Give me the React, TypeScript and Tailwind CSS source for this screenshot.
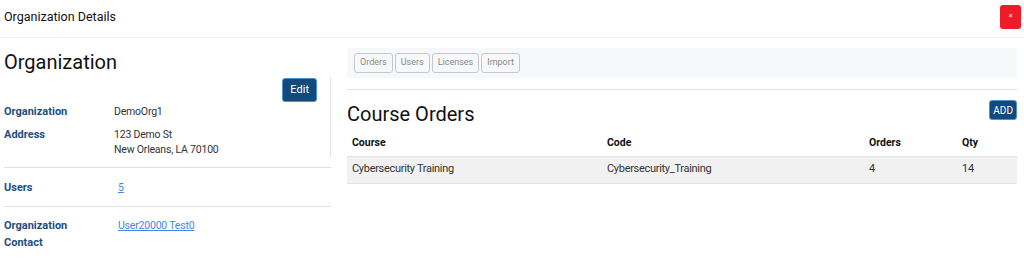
import React from 'react'

const font = { fontFamily: 'Roboto, "Liberation Sans", sans-serif' }

function InfoRow({ label, children }: { label: React.ReactNode; children: React.ReactNode }) {
  return (
    <div className="flex">
      <div className="w-[110px] shrink-0 font-bold text-[#1d4e7e] text-[11px] leading-[17px]">{label}</div>
      <div className="text-[10.5px] leading-[15px] tracking-[-0.2px] text-[#333] pt-[1px]">{children}</div>
    </div>
  )
}

export default function App() {
  const tabs = ['Orders', 'Users', 'Licenses', 'Import']

  return (
    <div className="w-[1024px] h-[277px] bg-white text-[#222] overflow-hidden" style={font}>
      {/* modal header */}
      <div className="flex items-center justify-between h-[38px] pl-[4px] pr-[3px] border-b border-[#eeeeee]">
        <span className="text-[12.5px] text-[#111] -mt-[3px]">Organization Details</span>
        <button className="w-[21px] h-[24px] -mt-[4px] rounded-[3px] bg-[#ee1c2a] text-white text-[7px] leading-none flex items-center justify-center">
          ×
        </button>
      </div>

      <div className="flex pt-[10px]">
        {/* left column */}
        <div className="w-[327px] shrink-0 ml-[4px]">
          <h2 className="text-[20px] leading-[28px] text-[#111]">Organization</h2>
          <div className="mt-[2px] pr-[13px] border-r border-[#e2e2e2]">
            <div className="flex justify-end">
              <button className="bg-[#134a7c] text-white text-[11px] px-[7px] h-[24px] rounded-[3px] border border-[#4d94c8]">
                Edit
              </button>
            </div>
            <div className="mt-[1px] flex flex-col gap-[6px]">
              <InfoRow label="Organization">DemoOrg1</InfoRow>
              <InfoRow label="Address">
                <div>123 Demo St</div>
                <div>New Orleans, LA 70100</div>
              </InfoRow>
            </div>
          </div>
          <div className="border-t border-[#e0e0e0] mt-[10px] pt-[11px] pb-[10px]">
            <InfoRow label="Users">
              <a className="ml-[4px] text-[#3f87e2] underline" href="#">5</a>
            </InfoRow>
          </div>
          <div className="border-t border-[#e0e0e0] pt-[10px]">
            <InfoRow label={<>Organization<br />Contact</>}>
              <a className="ml-[4px] text-[#3f87e2] underline" href="#">User20000 Test0</a>
            </InfoRow>
          </div>
        </div>

        {/* right column */}
        <div className="ml-[16px] w-[670px]">
          <div className="bg-[#f7f8f9] h-[30px] flex items-center gap-[2px] px-[7px]">
            {tabs.map(t => (
              <button
                key={t}
                className="h-[20px] px-[5px] text-[9px] text-[#888] border border-[#c8c8c8] rounded-[3px] bg-transparent"
              >
                {t}
              </button>
            ))}
          </div>
          <div className="border-t border-[#e2e2e2] mt-[11px]" />
          <div className="flex items-start justify-between mt-[10px]">
            <h3 className="text-[20px] leading-[28px] text-[#111]">Course Orders</h3>
            <button className="bg-[#134a7c] text-white text-[10px] h-[20px] px-[3px] rounded-[3px] border border-[#4d94c8]">
              ADD
            </button>
          </div>
          <table className="w-full mt-[2px] text-[11px] tracking-[-0.3px] border-collapse">
            <thead>
              <tr className="text-left text-[#111]">
                <th className="w-[255px] pl-[5px] h-[26px] font-bold text-[10.5px] tracking-normal">Course</th>
                <th className="w-[262px] pl-[5px] font-bold text-[10.5px] tracking-normal">Code</th>
                <th className="w-[93px] pl-[5px] font-bold text-[10.5px] tracking-normal">Orders</th>
                <th className="pl-[5px] font-bold text-[10.5px] tracking-normal">Qty</th>
              </tr>
            </thead>
            <tbody>
              <tr className="bg-[#f1f1f1] border-y border-[#e3e3e3] text-[#333]">
                <td className="pl-[5px] h-[27px]">Cybersecurity Training</td>
                <td className="pl-[5px]">Cybersecurity_Training</td>
                <td className="pl-[5px]">4</td>
                <td className="pl-[5px]">14</td>
              </tr>
            </tbody>
          </table>
        </div>
      </div>
    </div>
  )
}
